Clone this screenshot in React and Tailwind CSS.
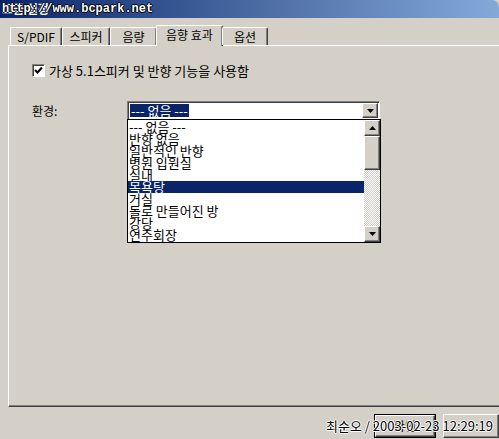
export default function App() {
  const items = [
    "--- 없음 ---",
    "반향 없음",
    "일반적인 반향",
    "병원 입원실",
    "실내",
    "목욕탕",
    "거실",
    "돌로 만들어진 방",
    "강당",
    "연주회장",
  ];
  const font = "font-['Noto_Sans_CJK_KR','Noto_Sans',sans-serif]";
  const raised =
    "border border-t-white border-l-white border-r-[#404040] border-b-[#404040] shadow-[inset_-1px_-1px_0_#808080]";
  const tabBase =
    "relative flex items-center justify-center border-t border-l border-r border-t-white border-l-white border-r-[#404040] shadow-[inset_-1px_0_0_#808080] rounded-tl-[2px] rounded-tr-[2px] text-[12px] text-black leading-none";
  return (
    <div className={`relative w-[499px] h-[439px] overflow-hidden bg-[#d4d0c8] ${font}`}>
      {/* title bar */}
      <div className="relative h-[18px] rounded-tr-[7px] bg-[linear-gradient(to_right,#0a246a,#2f4f8d_30%,#5171a8_56%,#84a9d9)]">
        <span className="absolute left-[2px] top-[1px] text-[12px] font-bold leading-[16px] text-white">고급 설정</span>
        <span className="absolute left-[2px] top-[2px] font-['Liberation_Mono',monospace] text-[12px] font-bold leading-[14px] text-white [text-shadow:1px_0_0_#000,-1px_0_0_#000,0_1px_0_#000,0_-1px_0_#000]">
          http://www.bcpark.net
        </span>
      </div>

      {/* tabs */}
      <div className="relative z-10 mt-[7px] flex h-[20px] items-end pl-[10px]">
        <div className={`${tabBase} h-[18px] w-[52px]`}>S/PDIF</div>
        <div className={`${tabBase} h-[18px] w-[48px]`}>스피커</div>
        <div className={`${tabBase} h-[18px] w-[47px]`}>음량</div>
        <div className={`${tabBase} -mb-[1px] h-[21px] w-[67px] -mx-[1px] bg-[#d4d0c8] pb-[2px]`}>음향 효과</div>
        <div className={`${tabBase} h-[18px] w-[46px]`}>옵션</div>
      </div>

      {/* panel */}
      <div className="relative ml-[8px] h-[362px] w-[500px] border-t border-l border-b border-t-white border-l-white border-b-[#404040] shadow-[inset_0_-1px_0_#808080] pl-[23px] pt-[18px]">
        <div className="flex h-[13px] items-center gap-[4px]">
          <div className="flex h-[13px] w-[13px] items-center justify-center border border-t-[#808080] border-l-[#808080] border-b-white border-r-white bg-white shadow-[inset_1px_1px_0_#404040]">
            <svg width="9" height="9" viewBox="0 0 9 9">
              <path d="M1 4 L3.5 6.5 L8 1.5" stroke="#000" strokeWidth="2" fill="none" />
            </svg>
          </div>
          <span className="text-[13px] leading-none text-black">가상 5.1스피커 및 반향 기능을 사용함</span>
        </div>

        <div className="mt-[24px] flex items-center">
          <span className="w-[95px] text-[12px] leading-none text-black">환경:</span>
          <div className="relative flex h-[19px] w-[253px] items-center border border-t-[#808080] border-l-[#808080] border-b-white border-r-white bg-white shadow-[inset_1px_1px_0_#404040] pl-[2px]">
            <span className="bg-[#0a246a] px-[1px] text-[13px] leading-[13px] text-white">--- 없음 ---</span>
            <div className={`absolute right-[1px] top-[1px] flex h-[15px] w-[16px] items-center justify-center bg-[#d4d0c8] ${raised}`}>
              <svg width="7" height="4" viewBox="0 0 7 4">
                <path d="M0 0 H7 L3.5 4 Z" fill="#000" />
              </svg>
            </div>
          </div>
        </div>

        {/* dropdown list overlay */}
        <div className="absolute left-[118px] top-[73px] z-20 flex h-[124px] w-[254px] border border-black bg-white">
          <div className="flex w-[236px] flex-col pt-[1px]">
            {items.map((t, i) => (
              <div
                key={t}
                className={`h-[12px] pl-[1px] text-[13px] leading-[12px] whitespace-nowrap ${
                  i === 5 ? "bg-[#0a246a] text-white" : "text-black"
                }`}
              >
                {t}
              </div>
            ))}
          </div>
          <div className="flex w-[16px] flex-col">
            <div className={`flex h-[16px] w-[16px] items-center justify-center bg-[#d4d0c8] ${raised}`}>
              <svg width="7" height="4" viewBox="0 0 7 4">
                <path d="M0 4 H7 L3.5 0 Z" fill="#000" />
              </svg>
            </div>
            <div className={`h-[34px] w-[16px] bg-[#d4d0c8] ${raised}`} />
            <div className="flex-1 bg-[repeating-conic-gradient(#d4d0c8_0_25%,#ffffff_0_50%)] bg-[length:2px_2px]" />
            <div className={`flex h-[16px] w-[16px] items-center justify-center bg-[#d4d0c8] ${raised}`}>
              <svg width="7" height="4" viewBox="0 0 7 4">
                <path d="M0 0 H7 L3.5 4 Z" fill="#000" />
              </svg>
            </div>
          </div>
        </div>
      </div>

      {/* buttons */}
      <div className="mt-[7px] flex gap-[7px] pl-[374px]">
        <div className="flex h-[24px] w-[88px] items-center justify-center border border-black bg-[#d4d0c8]">
          <div className={`flex h-full w-full items-center justify-center ${raised} text-[12px] leading-none text-black`}>확인</div>
        </div>
        <div className={`h-[24px] w-[80px] bg-[#d4d0c8] ${raised}`} />
      </div>

      {/* bottom watermark */}
      <span className="absolute left-[326px] top-[419px] whitespace-nowrap text-[13px] leading-[14px] text-black [text-shadow:1px_0_0_#fff,-1px_0_0_#fff,0_1px_0_#fff,0_-1px_0_#fff]">
        최순오 / 2003-02-23 12:29:19
      </span>
    </div>
  );
}
